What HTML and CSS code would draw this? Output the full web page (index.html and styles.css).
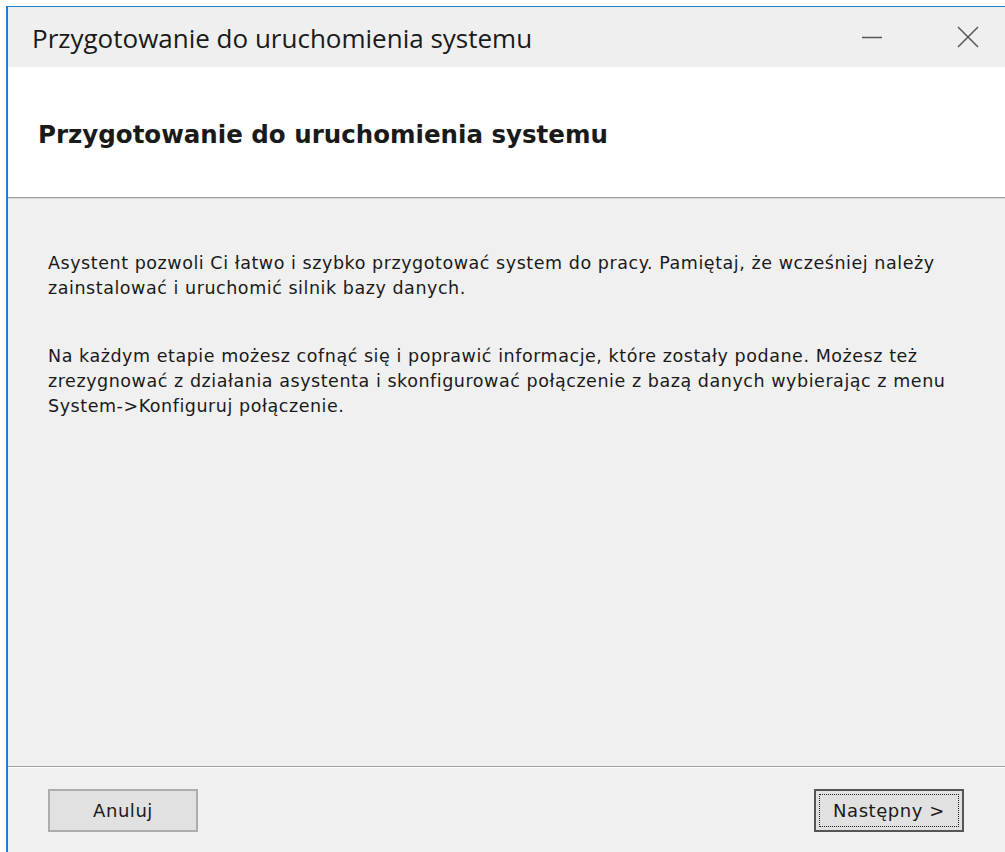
FILE: index.html
```html
<!DOCTYPE html>
<html lang="pl">
<head>
<meta charset="utf-8">
<title>Przygotowanie do uruchomienia systemu</title>
<link rel="stylesheet" href="styles.css">
</head>
<body>
<div class="window">
  <div class="titlebar">
    <span class="title">Przygotowanie do uruchomienia systemu</span>
    <div class="controls">
      <span class="ctl ctl-min">
        <svg width="20" height="20" viewBox="0 0 20 20"><path d="M0 10.5H20" stroke="#555" stroke-width="1.5"/></svg>
      </span>
      <span class="ctl ctl-close">
        <svg width="22" height="22" viewBox="0 0 22 22"><path d="M1 1L21 21M21 1L1 21" stroke="#555" stroke-width="1.5"/></svg>
      </span>
    </div>
  </div>
  <div class="header">
    <h1 class="heading">Przygotowanie do uruchomienia systemu</h1>
  </div>
  <div class="content">
    <p>Asystent pozwoli Ci łatwo i szybko przygotować system do pracy. Pamiętaj, że wcześniej należy<br>zainstalować i uruchomić silnik bazy danych.</p>
    <p>Na każdym etapie możesz cofnąć się i poprawić informacje, które zostały podane. Możesz też<br>zrezygnować z działania asystenta i skonfigurować połączenie z bazą danych wybierając z menu<br>System-&gt;Konfiguruj połączenie.</p>
  </div>
  <div class="footer">
    <button class="btn">Anuluj</button>
    <button class="btn btn-default"><span class="focus">Następny &gt;</span></button>
  </div>
</div>
</body>
</html>
```

FILE: styles.css
```css
html, body {
  margin: 0;
  padding: 0;
  background: #ffffff;
  overflow: hidden;
}

.window {
  margin: 6px 0 0 6px;
  height: 846px;
  border-top: 1px solid #1a7fd4;
  border-left: 2px solid #1a7fd4;
  display: flex;
  flex-direction: column;
  background: #f0f0f0;
}

.titlebar {
  height: 60px;
  flex: none;
  display: flex;
  align-items: center;
  justify-content: space-between;
  background: #efefef;
  padding-left: 24px;
}

.title {
  font-family: "Open Sans", "Noto Sans", sans-serif;
  font-size: 26px;
  color: #1a1a1a;
  position: relative;
  top: 1px;
}

.controls {
  display: flex;
  align-items: center;
  height: 100%;
}

.ctl {
  height: 100%;
  display: flex;
  align-items: center;
  justify-content: center;
}

.ctl-min {
  width: 96px;
}

.ctl-close {
  width: 74px;
  margin-left: 11px;
}

.header {
  height: 130px;
  flex: none;
  background: #ffffff;
  border-bottom: 1px solid #a0a0a0;
  box-shadow: 0 1px 0 #d6d6d6;
  display: flex;
  align-items: center;
  padding-left: 30px;
}

.heading {
  margin: 0;
  font-family: "DejaVu Sans", sans-serif;
  font-weight: bold;
  font-size: 24.5px;
  color: #1a1a1a;
  position: relative;
  top: 2px;
}

.content {
  flex: 1;
  padding: 53px 10px 0 40px;
  font-family: "DejaVu Sans", sans-serif;
  font-size: 17.5px;
  letter-spacing: 0.55px;
  line-height: 25px;
  color: #1a1a1a;
  white-space: nowrap;
}

.content p {
  margin: 0 0 43px 0;
}

.footer {
  height: 87px;
  flex: none;
  border-top: 1px solid #a0a0a0;
  box-shadow: inset 0 1px 0 #ffffff;
  display: flex;
  justify-content: space-between;
  align-items: flex-start;
  padding: 22px 41px 0 40px;
  box-sizing: border-box;
}

.btn {
  width: 150px;
  height: 43px;
  font-family: "DejaVu Sans", sans-serif;
  font-size: 18px;
  letter-spacing: 0.55px;
  color: #1a1a1a;
  background: #e1e1e1;
  border: 2px solid #adadad;
  padding: 0;
}

.btn-default {
  border: 2px solid #555555;
  padding: 3px;
}

.focus {
  display: flex;
  align-items: center;
  justify-content: center;
  height: 100%;
  border: 1px dotted #222;
  box-sizing: border-box;
}
```
